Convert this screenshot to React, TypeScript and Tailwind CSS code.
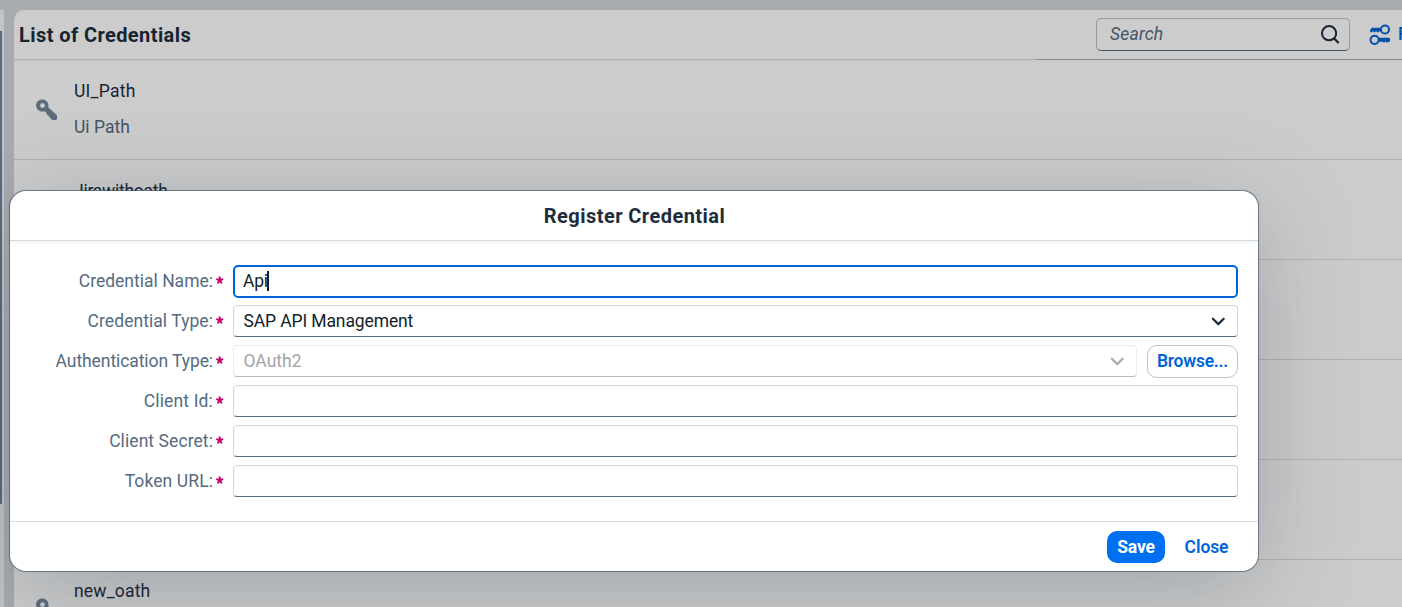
import React from "react";

function KeyIcon() {
  return (
    <svg width="22" height="22" viewBox="0 0 22 22" className="block shrink-0">
      <path
        fillRule="evenodd"
        fill="#73879e"
        d="M6.3 0.5C9.6 0.5 12.4 3 12.4 6.4V8.4L20.2 15.6C20.8 16.2 21 16.6 21 17.3V19.5C21 20.4 20.5 20.9 19.6 20.9H17.2C16.4 20.9 15.8 20.6 15.2 20L13.9 18.9V17.6H12.4V16H10.8V14.3L9 12.6H6.3C2.9 12.6 0.1 9.9 0.1 6.5C0.1 3 2.9 0.5 6.3 0.5ZM6.5 4.2A2.4 2.4 0 1 0 6.5 9A2.4 2.4 0 1 0 6.5 4.2Z"
      />
    </svg>
  );
}

function RegisterIcon() {
  return (
    <svg width="22" height="22" viewBox="0 0 22 22" fill="none" className="block shrink-0">
      <g stroke="#0064d9" strokeWidth="2">
        <circle cx="16" cy="5.5" r="4.1" />
        <circle cx="5.6" cy="15.8" r="4.1" />
      </g>
      <path fill="#0064d9" d="M11.6 3.7H3L1.2 5.6V8.3H3V7.6H4.6V8.3H6.4V7.6H8V8.3H9.7V7.6H11.6Z" />
      <path fill="#0064d9" d="M9.9 13.7H20L21 14.6V17.7H19.2V18.4H17.4V17.7H15.8V18.4H14V17.7H9.9Z" />
    </svg>
  );
}

function Chevron({ className }: { className: string }) {
  return (
    <svg width="14" height="10" viewBox="0 0 14 10" fill="none" className={className}>
      <path d="M1.9 2.7L7.3 8.1L12.7 2.7" stroke="currentColor" strokeWidth="2.2" strokeLinecap="round" strokeLinejoin="round" />
    </svg>
  );
}

const credentials = [
  { name: "UI_Path", note: "Ui Path", spacing: "tracking-[0.25px]" },
  { name: "Jirawithoath", note: "Jira", spacing: "tracking-[-0.25px]" },
  { name: "", note: "", spacing: "" },
  { name: "", note: "", spacing: "" },
  { name: "", note: "", spacing: "" },
  { name: "new_oath", note: "", spacing: "tracking-[0.2px]" },
];

function Label({ children, spacing }: { children: string; spacing: string }) {
  return (
    <div className="flex h-8 w-[214px] shrink-0 items-center justify-end text-[#556b82]">
      <span className={spacing}>{children}</span>
      <span className="ml-[3px] flex w-2 justify-center pb-0.5">
        <svg width="8" height="8" viewBox="0 0 8 8" className="block">
          <path d="M3.7 0.4V4.3M3.7 4.3L0.2 3.1M3.7 4.3L7.2 3.1M3.7 4.3L1.6 7.4M3.7 4.3L5.8 7.4" stroke="#ba066c" strokeWidth="2" fill="none" />
        </svg>
      </span>
    </div>
  );
}

const field =
  "flex h-8 flex-1 items-center rounded-[4px] border border-[#d0d6dd] border-b-[#556b82] bg-white pl-[9.5px]";

export default function App() {
  return (
    <div className="relative h-[607px] w-[1402px] overflow-hidden bg-[#d2d8dc] font-['Roboto','Liberation_Sans',sans-serif] text-[17.5px] leading-[22px] text-[#1d2d3e]">
      <div className="flex h-full pt-2.5">
        <div className="flex w-1 shrink-0 bg-[#f5f5f5] pt-[21px]">
          <div className="h-[473px] w-0.5 bg-[#7085a4]" />
        </div>
        <main className="ml-2.5 w-[1388px] overflow-hidden rounded-tl-[10px] bg-white">
          <header className="flex h-[49px] items-center">
            <h1 className="ml-[5px] w-[1077px] shrink-0 text-[20px] font-bold tracking-[0.42px]">List of Credentials</h1>
            <div className="flex h-[33px] w-[254px] shrink-0 items-center rounded-[5px] border border-[#bcc3ca] border-b-[#556b82] pl-[13px] pr-[9px]">
              <span className="flex-1 pb-[2px] italic tracking-[0.2px] text-[#556b82]">Search</span>
              <svg width="20" height="20" viewBox="0 0 20 20" fill="none" className="block">
                <circle cx="9.1" cy="8.2" r="7.1" stroke="#1d2d3e" strokeWidth="2" />
                <path d="M14 13.2L18.6 17.9" stroke="#1d2d3e" strokeWidth="2.2" />
              </svg>
            </div>
            <div className="ml-[19px] flex shrink-0 items-center text-[#0064d9]">
              <RegisterIcon />
              <span className="ml-[7px] pb-px font-medium">Register</span>
            </div>
          </header>
          <div className="flex h-px">
            <div className="w-[1023px] bg-[#d9d9d9]" />
            <div className="flex-1 bg-[#a8b2bd]" />
          </div>
          <div className="-mt-px shadow-[inset_0_4px_3px_-2px_rgba(0,0,0,0.04)]">
            {credentials.map((c, i) => (
              <div key={i} className="flex h-[100px] items-center border-b border-[#dcdcdc] pb-px pl-[22px] first:h-[101px] first:pt-px first:pb-0">
                {c.name && (
                  <>
                    <KeyIcon />
                    <div className="ml-4 flex flex-col gap-3.5 pb-px">
                      <span className={c.spacing}>{c.name}</span>
                      <span className="min-h-[22px] text-[#556b82]">{c.note}</span>
                    </div>
                  </>
                )}
              </div>
            ))}
          </div>
        </main>
      </div>

      <div className="absolute inset-0 bg-black/20" />

      <section
        role="dialog"
        className="absolute left-[10px] top-[191px] flex h-[380px] w-[1248px] flex-col rounded-2xl bg-white shadow-[0_0_0_1px_rgba(70,85,105,0.6),0_0_2px_0_rgba(34,53,72,0.4),0_20px_100px_0_rgba(34,53,72,0.26)]"
      >
        <div className="flex h-[50px] shrink-0 items-center justify-center border-b border-[#d9d9d9] shadow-[0_2px_4px_rgba(34,53,72,0.06)]">
          <h2 className="pl-px text-[20px] font-bold tracking-[0.45px]">Register Credential</h2>
        </div>
        <div className="flex h-[280px] flex-col gap-2 pr-5 pt-6">
          <div className="flex gap-[9px]">
            <Label spacing="tracking-normal">Credential Name:</Label>
            <div className="flex h-[33px] flex-1 items-center rounded-[5px] border-2 border-[#0064d9] pb-px pl-2 text-[#131e29]">
              <span className="tracking-[-0.2px]">Api</span>
              <span className="-ml-px h-5 w-0.5 bg-[#131e29]" />
            </div>
          </div>
          <div className="-mt-px flex gap-[9px]">
            <Label spacing="tracking-[0.06px]">Credential Type:</Label>
            <div className={field + " justify-between pr-3 text-[#131e29]"}>
              <span className="tracking-[-0.12px]">SAP API Management</span>
              <Chevron className="text-[#1d2d3e]" />
            </div>
          </div>
          <div className="flex gap-[9px]">
            <Label spacing="tracking-[-0.08px]">Authentication Type:</Label>
            <div className="flex flex-1 gap-2.5">
              <div className="flex h-8 flex-1 items-center justify-between rounded-[4px] border border-[#ebeef0] border-b-[#b2bcc7] pl-[9.5px] pr-3 text-[#a1a5a9]">
                <span>OAuth2</span>
                <Chevron className="text-[#a5abb2]" />
              </div>
              <button className="-mb-px h-[33px] w-[91px] rounded-[10px] border border-[#bcc3ca] pb-px font-semibold tracking-[-0.25px] text-[#0064d9]">
                Browse...
              </button>
            </div>
          </div>
          <div className="flex gap-[9px]">
            <Label spacing="tracking-[0.15px]">Client Id:</Label>
            <div className={field} />
          </div>
          <div className="flex gap-[9px]">
            <Label spacing="tracking-[0.08px]">Client Secret:</Label>
            <div className={field} />
          </div>
          <div className="flex gap-[9px]">
            <Label spacing="tracking-[0.1px]">Token URL:</Label>
            <div className={field} />
          </div>
        </div>
        <footer className="flex flex-1 items-center justify-end gap-2.5 border-t border-[#d9d9d9] pr-5 font-semibold">
          <button className="h-8 w-[58px] rounded-[10px] bg-[#0070f2] font-bold tracking-[-0.2px] text-white">Save</button>
          <button className="h-8 w-[63px] tracking-[-0.1px] text-[#0064d9]">Close</button>
        </footer>
      </section>
    </div>
  );
}
